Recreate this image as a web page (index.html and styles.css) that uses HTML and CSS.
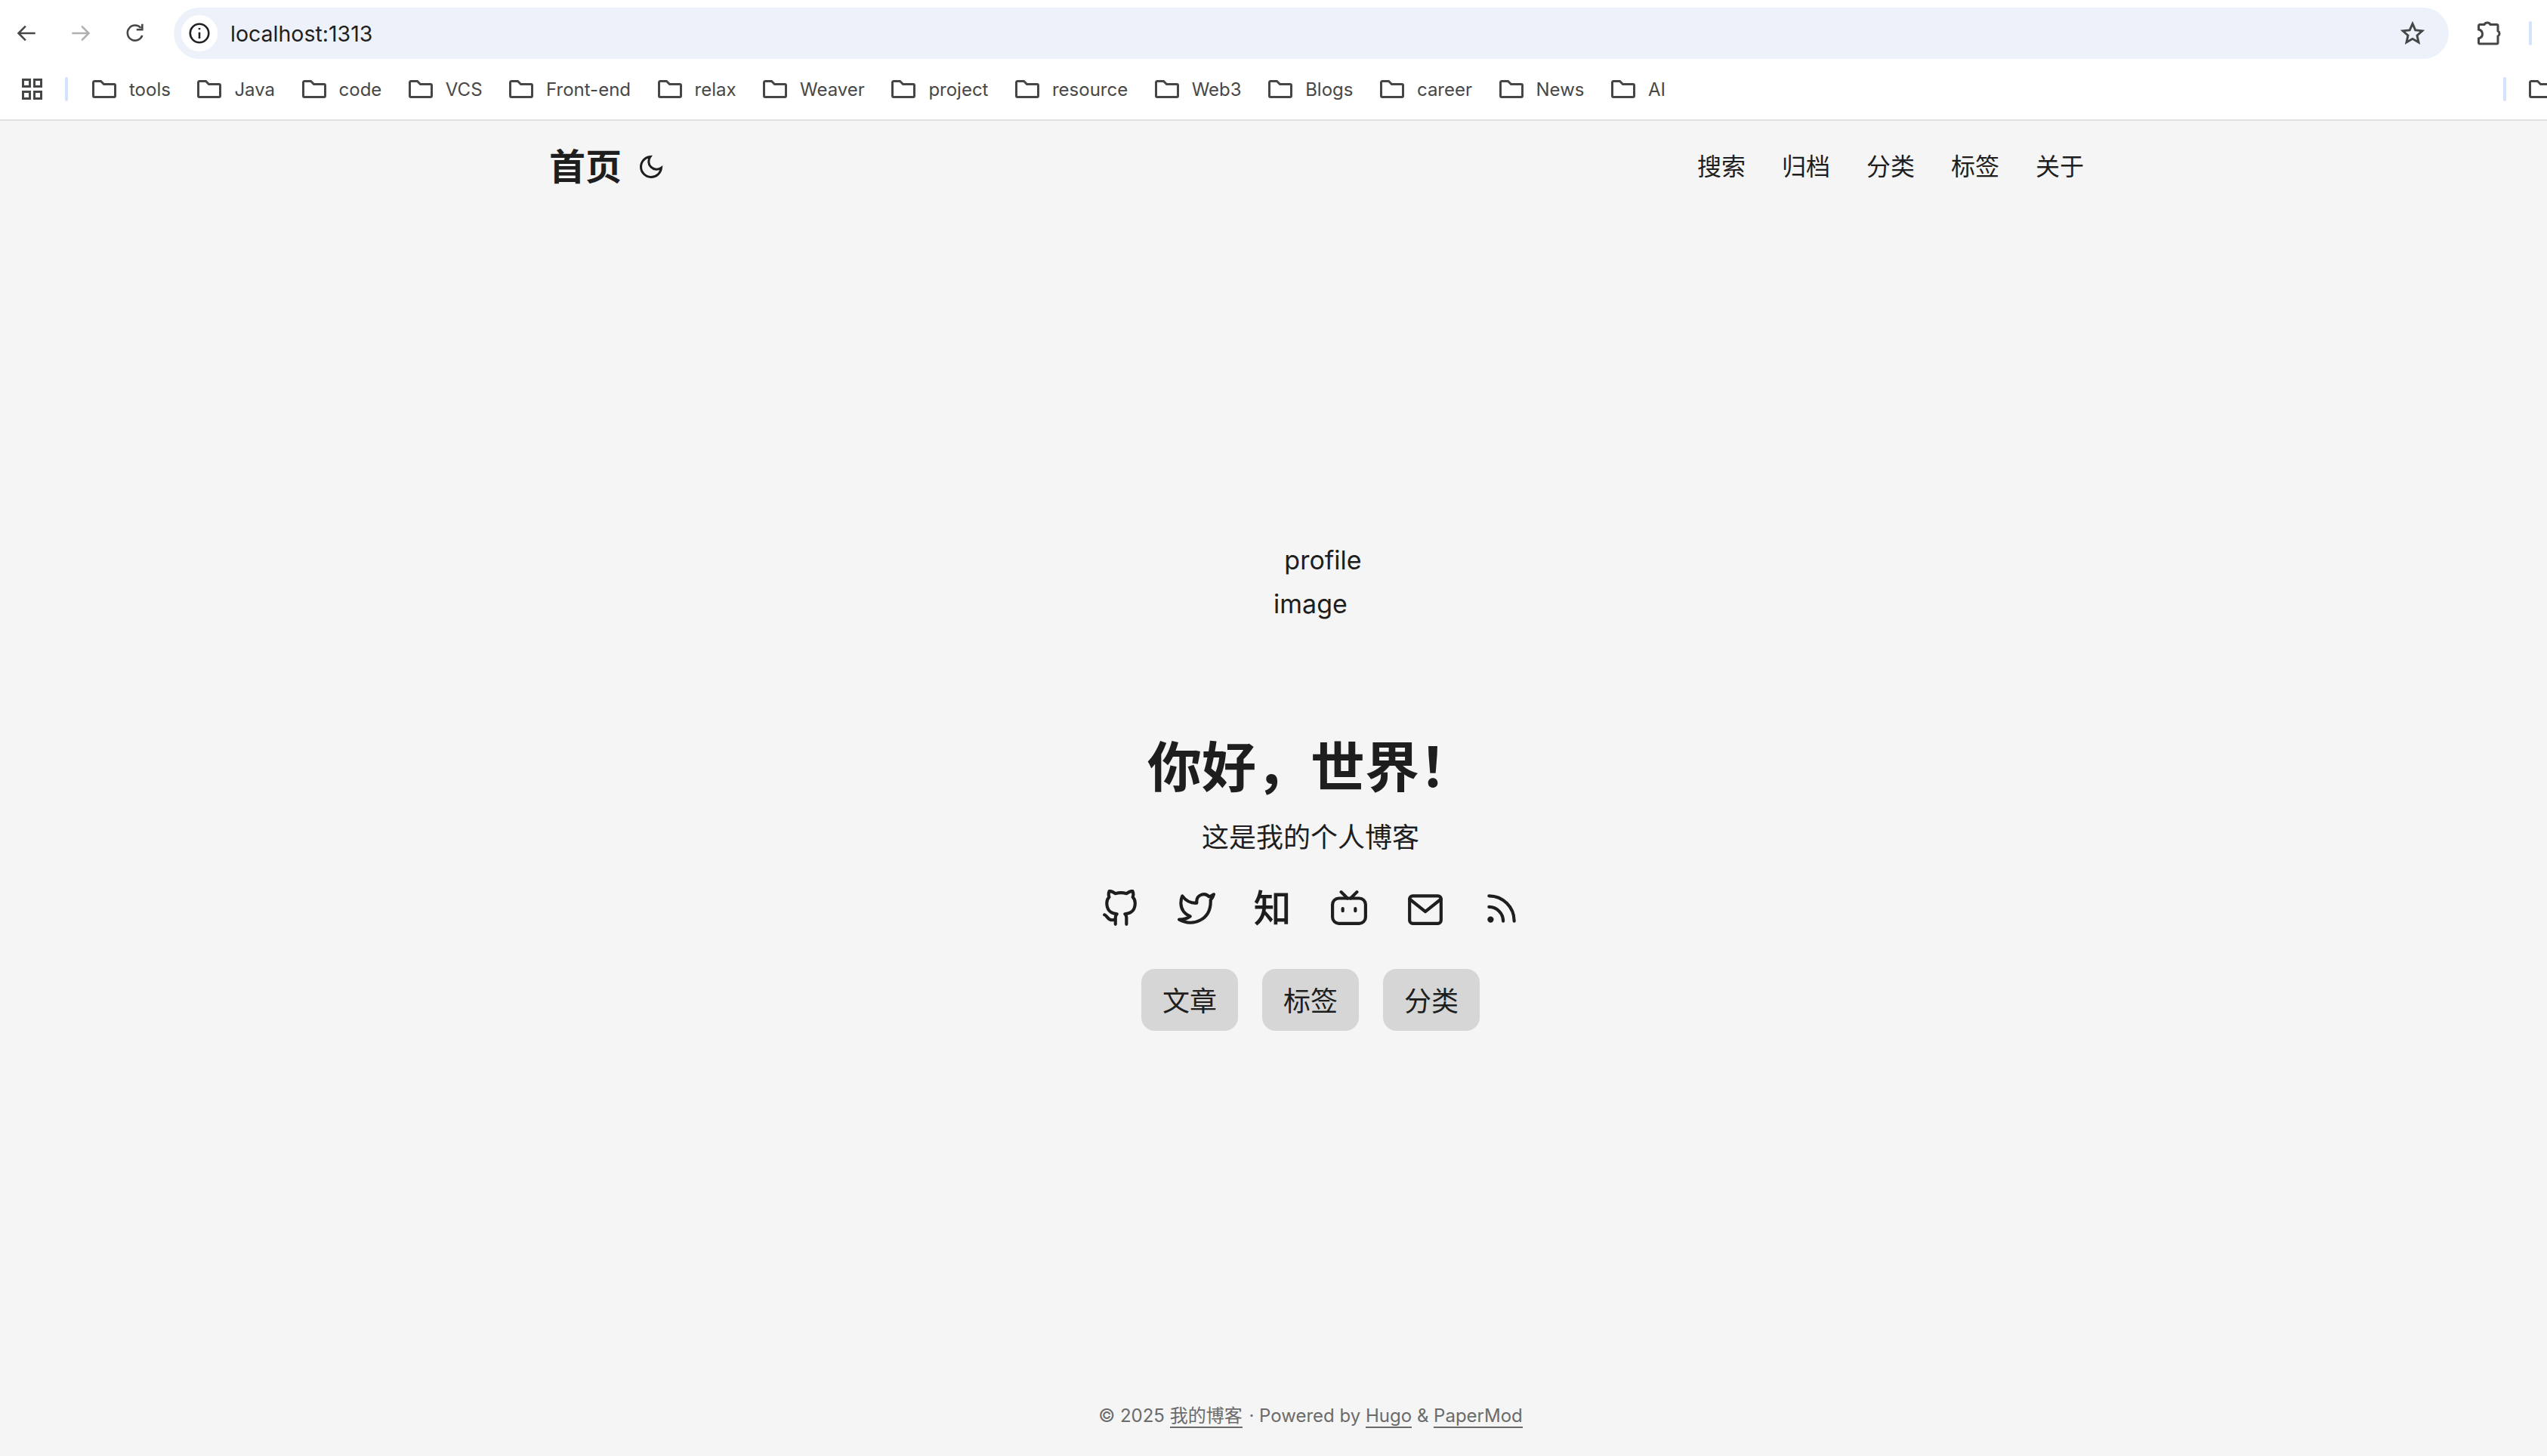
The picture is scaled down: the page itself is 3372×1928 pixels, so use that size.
FILE: index.html
```html
<!DOCTYPE html>
<html lang="en">
<head>
    <meta charset="UTF-8">
    <meta name="viewport" content="width=device-width, initial-scale=1.0">
    <title>首页</title>
    <link rel="stylesheet" href="styles.css">
</head>
<body>
    <div class="toolbar">
        <span class="tool-btn">
            <svg viewBox="0 0 24 24" class="chrome-icon"><path d="M22 12H3M11 4l-8 8 8 8"/></svg>
        </span>
        <span class="tool-btn tool-btn-off">
            <svg viewBox="0 0 24 24" class="chrome-icon"><path d="M2 12h19M13 4l8 8-8 8"/></svg>
        </span>
        <span class="tool-btn">
            <svg viewBox="0 0 24 24" class="chrome-icon"><path d="M20 14.5A8.6 8.6 0 1 1 18.4 6M20 1.5V8h-6.5"/></svg>
        </span>
        <div class="address">
            <span class="site-info">
                <svg viewBox="0 0 24 24" class="info-icon"><circle cx="12" cy="12" r="10.5"/><path d="M12 11v7M12 6v2"/></svg>
            </span>
            <span class="url">localhost:1313</span>
            <svg viewBox="0 0 24 24" class="star-icon"><path d="M12 2.6l2.8 6.3 6.9.7-5.2 4.6 1.5 6.8-6-3.5-6 3.5 1.5-6.8-5.2-4.6 6.900-.7z"/></svg>
        </div>
        <svg viewBox="0 0 32 32" class="ext-icon"><path d="M3 4.500h6a4.500 4.500 0 0 1 8 0h8.500A1.500 1.500 0 0 1 27 6v7a4 4 0 0 1 0 7v8.500a1.500 1.500 0 0 1-1.500 1.500H3a1.500 1.500 0 0 1-1.500-1.500V23c3.500-1 5-3.500 5-6s-1.500-5-5-6V6A1.500 1.500 0 0 1 3 4.500z"/></svg>
        <span class="divider toolbar-divider"></span>
    </div>

    <div class="bookmarks">
        <svg viewBox="0 0 27 28" class="apps-icon">
            <rect x="1.500" y="1.500" width="9" height="9"/>
            <rect x="16.500" y="1.500" width="9" height="9"/>
            <rect x="1.500" y="17.500" width="9" height="9"/>
            <rect x="16.500" y="17.500" width="9" height="9"/>
        </svg>
        <span class="divider apps-divider"></span>
        <div class="bookmark-list">
            <a class="bookmark"><svg viewBox="0 0 32 24" class="folder"><path d="M3 1.500h8.500l4 4H29A1.500 1.500 0 0 1 30.500 7v14a1.500 1.500 0 0 1-1.500 1.500H3A1.500 1.500 0 0 1 1.500 21V3A1.500 1.500 0 0 1 3 1.500z"/></svg>tools</a>
            <a class="bookmark"><svg viewBox="0 0 32 24" class="folder"><path d="M3 1.500h8.500l4 4H29A1.500 1.500 0 0 1 30.500 7v14a1.500 1.500 0 0 1-1.500 1.500H3A1.500 1.500 0 0 1 1.500 21V3A1.500 1.500 0 0 1 3 1.500z"/></svg>Java</a>
            <a class="bookmark"><svg viewBox="0 0 32 24" class="folder"><path d="M3 1.500h8.500l4 4H29A1.500 1.500 0 0 1 30.500 7v14a1.500 1.500 0 0 1-1.500 1.500H3A1.500 1.500 0 0 1 1.500 21V3A1.500 1.500 0 0 1 3 1.500z"/></svg>code</a>
            <a class="bookmark"><svg viewBox="0 0 32 24" class="folder"><path d="M3 1.500h8.500l4 4H29A1.500 1.500 0 0 1 30.500 7v14a1.500 1.500 0 0 1-1.500 1.500H3A1.500 1.500 0 0 1 1.500 21V3A1.500 1.500 0 0 1 3 1.500z"/></svg>VCS</a>
            <a class="bookmark"><svg viewBox="0 0 32 24" class="folder"><path d="M3 1.500h8.500l4 4H29A1.500 1.500 0 0 1 30.500 7v14a1.500 1.500 0 0 1-1.500 1.500H3A1.500 1.500 0 0 1 1.500 21V3A1.500 1.500 0 0 1 3 1.500z"/></svg>Front-end</a>
            <a class="bookmark"><svg viewBox="0 0 32 24" class="folder"><path d="M3 1.500h8.500l4 4H29A1.500 1.500 0 0 1 30.500 7v14a1.500 1.500 0 0 1-1.500 1.500H3A1.500 1.500 0 0 1 1.500 21V3A1.500 1.500 0 0 1 3 1.500z"/></svg>relax</a>
            <a class="bookmark"><svg viewBox="0 0 32 24" class="folder"><path d="M3 1.500h8.500l4 4H29A1.500 1.500 0 0 1 30.500 7v14a1.500 1.500 0 0 1-1.500 1.500H3A1.500 1.500 0 0 1 1.500 21V3A1.500 1.500 0 0 1 3 1.500z"/></svg>Weaver</a>
            <a class="bookmark"><svg viewBox="0 0 32 24" class="folder"><path d="M3 1.500h8.500l4 4H29A1.500 1.500 0 0 1 30.500 7v14a1.500 1.500 0 0 1-1.500 1.500H3A1.500 1.500 0 0 1 1.500 21V3A1.500 1.500 0 0 1 3 1.500z"/></svg>project</a>
            <a class="bookmark"><svg viewBox="0 0 32 24" class="folder"><path d="M3 1.500h8.500l4 4H29A1.500 1.500 0 0 1 30.500 7v14a1.500 1.500 0 0 1-1.500 1.500H3A1.500 1.500 0 0 1 1.500 21V3A1.500 1.500 0 0 1 3 1.500z"/></svg>resource</a>
            <a class="bookmark"><svg viewBox="0 0 32 24" class="folder"><path d="M3 1.500h8.500l4 4H29A1.500 1.500 0 0 1 30.500 7v14a1.500 1.500 0 0 1-1.500 1.500H3A1.500 1.500 0 0 1 1.500 21V3A1.500 1.500 0 0 1 3 1.500z"/></svg>Web3</a>
            <a class="bookmark"><svg viewBox="0 0 32 24" class="folder"><path d="M3 1.500h8.500l4 4H29A1.500 1.500 0 0 1 30.500 7v14a1.500 1.500 0 0 1-1.500 1.500H3A1.500 1.500 0 0 1 1.500 21V3A1.500 1.500 0 0 1 3 1.500z"/></svg>Blogs</a>
            <a class="bookmark"><svg viewBox="0 0 32 24" class="folder"><path d="M3 1.500h8.500l4 4H29A1.500 1.500 0 0 1 30.500 7v14a1.500 1.500 0 0 1-1.500 1.500H3A1.500 1.500 0 0 1 1.500 21V3A1.500 1.500 0 0 1 3 1.500z"/></svg>career</a>
            <a class="bookmark"><svg viewBox="0 0 32 24" class="folder"><path d="M3 1.500h8.500l4 4H29A1.500 1.500 0 0 1 30.500 7v14a1.500 1.500 0 0 1-1.500 1.500H3A1.500 1.500 0 0 1 1.500 21V3A1.500 1.500 0 0 1 3 1.500z"/></svg>News</a>
            <a class="bookmark"><svg viewBox="0 0 32 24" class="folder"><path d="M3 1.500h8.500l4 4H29A1.500 1.500 0 0 1 30.500 7v14a1.500 1.500 0 0 1-1.500 1.500H3A1.500 1.500 0 0 1 1.500 21V3A1.500 1.500 0 0 1 3 1.500z"/></svg>AI</a>
        </div>
        <span class="divider end-divider"></span>
        <svg viewBox="0 0 32 24" class="folder folder-cut"><path d="M3 1.500h8.500l4 4H29A1.500 1.500 0 0 1 30.500 7v14a1.500 1.500 0 0 1-1.500 1.500H3A1.500 1.500 0 0 1 1.500 21V3A1.500 1.500 0 0 1 3 1.500z"/></svg>
    </div>

    <div class="page">
        <header class="nav">
            <div class="logo">
                <a class="logo-text">首页</a>
                <svg viewBox="0 0 24 24" class="moon"><path d="M21 12.790A9 9 0 1 1 11.210 3 7 7 0 0 0 21 12.790z"/></svg>
            </div>
            <ul class="menu">
                <li>搜索</li>
                <li>归档</li>
                <li>分类</li>
                <li>标签</li>
                <li>关于</li>
            </ul>
        </header>

        <main class="hero">
            <div class="profile-alt">
                <span class="alt-first">profile</span>
                <span>image</span>
            </div>
            <h1>你好，世界！</h1>
            <p class="sub">这是我的个人博客</p>
            <div class="social">
                <svg viewBox="0 0 24 24" class="social-icon"><path d="M9 19c-5 1.500-5-2.500-7-3m14 6v-3.870a3.370 3.370 0 0 0-.94-2.610c3.140-.35 6.440-1.540 6.440-7A5.440 5.440 0 0 0 20 4.770 5.070 5.070 0 0 0 19.910 1S18.730.65 16 2.480a13.380 13.380 0 0 0-7 0C6.270.65 5.090 1 5.090 1A5.070 5.070 0 0 0 5 4.770a5.440 5.440 0 0 0-1.500 3.750c0 5.420 3.300 6.610 6.440 7A3.370 3.370 0 0 0 9 18.130V22"/></svg>
                <svg viewBox="0 0 24 24" class="social-icon"><path d="M23 3a10.900 10.900 0 0 1-3 1.530 4.480 4.480 0 0 0-7.860 3v1A10.660 10.660 0 0 1 3 4s-4 9 5 13a11.640 11.640 0 0 1-7 2c9 5 20 0 20-11.500a4.500 4.500 0 0 0-.08-.83A7.720 7.720 0 0 0 23 3z"/></svg>
                <span class="social-zhi">知</span>
                <svg viewBox="0 0 24 24" class="social-icon"><rect x="1.500" y="5.500" width="21" height="16" rx="4"/><path d="M7 1.500l4 4M17 1.500l-4 4M8 12v1.500M16 12v1.500"/></svg>
                <svg viewBox="0 0 24 24" class="social-icon"><path d="M4 4h16c1.100 0 2 .9 2 2v13.500c0 1.100-.9 2-2 2H4c-1.100 0-2-.9-2-2V6c0-1.100.9-2 2-2z"/><path d="M22 6l-10 8L2 6"/></svg>
                <svg viewBox="0 0 24 24" class="social-icon"><path d="M4 11a9 9 0 0 1 9 9M4 4a16 16 0 0 1 16 16"/><circle cx="5" cy="19" r="1"/></svg>
            </div>
            <div class="buttons">
                <a class="button">文章</a>
                <a class="button">标签</a>
                <a class="button">分类</a>
            </div>
        </main>

        <footer class="footer">
            © 2025 <a class="footer-blog">我的博客</a> · Powered by <a>Hugo</a> &amp; <a>PaperMod</a>
        </footer>
    </div>
</body>
</html>
```

FILE: styles.css
```css
* {
    box-sizing: border-box;
}

html, body {
    margin: 0;
    padding: 0;
}

body {
    width: 100%;
    height: 100vh;
    overflow: hidden;
    display: flex;
    flex-direction: column;
    background: #f5f5f5;
    color: #1e1e1e;
    font-family: Inter, "Noto Sans CJK SC", sans-serif;
}

/* browser chrome */
.toolbar {
    height: 88px;
    padding: 0 20px 0 19px;
    display: flex;
    align-items: center;
    background: #fff;
}

.tool-btn {
    width: 32px;
    height: 32px;
    margin-right: 40px;
    display: flex;
    align-items: center;
    justify-content: center;
    color: #474747;
}

.tool-btn-off {
    color: #b0b0b0;
}

.tool-btn:nth-child(3) {
    margin-right: 35px;
}

.chrome-icon {
    width: 28px;
    height: 28px;
    fill: none;
    stroke: currentColor;
    stroke-width: 2.200;
}

.address {
    flex: 1;
    height: 68px;
    padding: 0 32px 0 10px;
    display: flex;
    align-items: center;
    background: #edf2fa;
    border-radius: 34px;
}

.site-info {
    width: 48px;
    height: 48px;
    margin-right: 17px;
    display: flex;
    align-items: center;
    justify-content: center;
    background: #fff;
    border-radius: 50%;
}

.info-icon {
    width: 28px;
    height: 28px;
    fill: none;
    stroke: #1f1f1f;
    stroke-width: 2.200;
}

.url {
    flex: 1;
    font-size: 28.500px;
    color: #1f1f1f;
}

.star-icon {
    width: 32px;
    height: 32px;
    fill: none;
    stroke: #444746;
    stroke-width: 2.200;
}

.ext-icon {
    width: 32px;
    height: 32px;
    margin-left: 38px;
    fill: none;
    stroke: #444746;
    stroke-width: 3;
}

.divider {
    width: 4px;
    height: 32px;
    background: #d3e3fd;
    border-radius: 2px;
    flex-shrink: 0;
}

.toolbar-divider {
    margin-left: 36px;
}

.bookmarks {
    height: 72px;
    padding: 0 0 10px 29px;
    display: flex;
    align-items: center;
    background: #fff;
    border-bottom: 2px solid #e1e1e1;
    overflow: hidden;
}

.apps-icon {
    width: 27px;
    height: 28px;
    flex-shrink: 0;
    fill: none;
    stroke: #444746;
    stroke-width: 3;
}

.apps-divider {
    margin-left: 30px;
}

.bookmark-list {
    margin-left: 32px;
    display: flex;
    gap: 35.500px;
}

.bookmark {
    display: flex;
    align-items: center;
    gap: 17px;
    font-size: 24px;
    color: #474747;
}

.folder {
    width: 32px;
    height: 24px;
    flex-shrink: 0;
    fill: none;
    stroke: #444746;
    stroke-width: 3;
}

.end-divider {
    margin-left: auto;
}

.folder-cut {
    margin: 0 -8px 0 30px;
}

/* blog page */
.page {
    flex: 1;
    width: 2016px;
    margin-left: 727px;
    display: flex;
    flex-direction: column;
}

.nav {
    height: 116px;
    margin-right: -16px;
    display: flex;
    align-items: center;
    justify-content: space-between;
}

.logo {
    display: flex;
    align-items: center;
    gap: 21px;
    font-size: 48px;
    font-weight: 700;
}

.logo-text {
    margin-bottom: 2px;
}

.moon {
    width: 36px;
    height: 36px;
    margin-top: 6px;
    fill: none;
    stroke: #1e1e1e;
    stroke-width: 2;
}

.menu {
    margin: 0;
    padding: 0;
    list-style: none;
    display: flex;
    gap: 48px;
    font-size: 32px;
}

.hero {
    flex: 1;
    padding-top: 437px;
    display: flex;
    flex-direction: column;
    align-items: center;
}

.profile-alt {
    display: flex;
    flex-direction: column;
    align-items: center;
    font-size: 34px;
    line-height: 58px;
}

.alt-first {
    padding-left: 33px;
}

.hero h1 {
    margin: 142px 0 0;
    font-size: 72px;
    line-height: 90px;
    font-weight: 700;
}

.sub {
    margin: 22px 0 0;
    font-size: 36px;
    line-height: 52px;
}

.social {
    margin-top: 43px;
    display: flex;
    align-items: center;
    gap: 51px;
}

.social-icon {
    width: 50px;
    height: 50px;
    fill: none;
    stroke: #1e1e1e;
    stroke-width: 2;
    stroke-linecap: round;
    stroke-linejoin: round;
}

.social-zhi {
    width: 50px;
    font-size: 50px;
    line-height: 50px;
    font-weight: 500;
}

.buttons {
    margin-top: 55px;
    display: flex;
    gap: 32px;
}

.button {
    width: 128px;
    height: 82px;
    padding-bottom: 2px;
    display: flex;
    align-items: center;
    justify-content: center;
    background: #d6d6d6;
    border-radius: 18px;
    font-size: 36px;
}

.footer {
    height: 108px;
    padding-top: 37px;
    text-align: center;
    font-size: 24px;
    line-height: 36px;
    color: #6b6b6b;
}

.footer a {
    border-bottom: 2px solid #6b6b6b;
}

.footer-blog {
    margin-right: 2px;
}
```
